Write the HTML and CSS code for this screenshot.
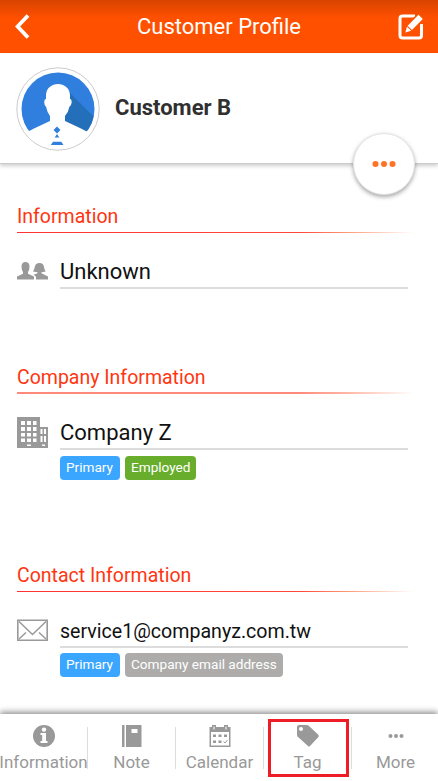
FILE: index.html
```html
<!DOCTYPE html>
<html lang="en">
<head>
  <meta charset="UTF-8">
  <meta name="viewport" content="width=device-width, initial-scale=1">
  <title>Customer Profile</title>
  <link rel="stylesheet" href="styles.css">
</head>
<body>

<header class="topbar">
  <svg class="back" width="15" height="25" viewBox="0 0 15 25"><path d="M13 1.500 2.600 12.500 13 23.500" fill="none" stroke="#fff" stroke-width="3.800"/></svg>
  <h1>Customer Profile</h1>
  <svg class="edit" width="26" height="26" viewBox="0 0 26 26">
    <path d="M17 2H4.500Q2 2 2 4.500V21.500Q2 24 4.500 24H21Q23.500 24 23.500 21.500V10" fill="none" stroke="#fff" stroke-width="3"/>
    <path d="M20.500 -1 27 5.500 14 19H6.500V12Z" fill="#ff5000"/>
    <path d="M20.500 .8 24.800 5 14 16 9.700 11.700Z M9 12.500 13.200 16.800 7.300 18.500Z" fill="#fff"/>
  </svg>
</header>

<div class="profile">
  <svg class="avatar" width="84" height="84" viewBox="0 0 84 84">
    <defs>
      <clipPath id="disc"><circle cx="42" cy="42" r="36.500"/></clipPath>
    </defs>
    <circle cx="42" cy="42" r="41.200" fill="#fff" stroke="#ccc" stroke-width="1"/>
    <g clip-path="url(#disc)">
      <rect width="84" height="84" fill="#307fdf"/>
      <path d="M52 24 84 56V84H48V50Z" fill="#246fb9"/>
    </g>
    <path d="M30 32V28.500C30 13 54 13 54 28.500V32C56.500 32 56 38.500 53.500 39.500Q52.500 45 49 49V54L65 61.500Q69 63.500 72 65L68 73Q56 82 42 82T16 73L11 65Q14 63.500 18 61.500L34 54V49Q31 45 30 39.500C28 38.500 27.500 32 30 32Z" fill="#fff"/>
    <path d="M41 59.500 44.500 63 41 66.500 37.500 63Z M41 67 43.300 70.500H38.700Z M37 74.800H45.300L47.500 78H34.800Z" fill="#307fdf"/>
  </svg>
  <h2>Customer B</h2>
  <button class="fab" aria-label="Actions">
    <svg width="24" height="8" viewBox="0 0 24 8" fill="#ff7226"><circle cx="3.500" cy="4" r="3"/><circle cx="12" cy="4" r="3"/><circle cx="20.500" cy="4" r="3"/></svg>
  </button>
</div>

<main>
  <section class="basic">
    <h3>Information</h3>
    <div class="field">
      <svg width="31" height="31" viewBox="0 0 31 31" fill="#999">
        <path d="M0 23.500V20.500L6 17.800V16Q4.500 14 4.500 10.500Q4.500 6 8.500 6T12.500 10.500Q12.500 14 11 16V17.800L17 20.500V23.500Z"/>
        <path d="M19 23.500V20.500L16.500 18.800L20.500 17.300V16.200L16 15.500Q17.500 13.500 17.700 11Q18.500 7 22.500 7T27 11Q27.200 13.500 28.700 15.500L24.500 16.200V17.300L31 20.500V23.500Z"/>
      </svg>
      <div class="value">Unknown</div>
    </div>
  </section>

  <section class="company">
    <h3>Company Information</h3>
    <div class="field">
      <svg width="31" height="31" viewBox="0 0 31 31">
        <path d="M0 0H23V10H31V31H0Z" fill="#999"/>
        <path d="M4 4h4v4H4zM10 4h4v4h-4zM16 4h3.500v4h-3.500zM4 10h4v4H4zM10 10h4v4h-4zM16 10h3.500v4h-3.500zM4 16h4v3.500H4zM10 16h4v3.500h-4zM16 16h3.500v3.500h-3.500zM4 21.500h4v3.500H4zM10 21.500h4v3.500h-4zM16 21.500h3.500v3.500h-3.500zM10 27.500h4v1.500h-4zM25 27.500h3v1.500h-3zM23.500 12h2v5h-2zM27 12h2v5h-2zM23.500 19h2v6h-2zM27 19h2v6h-2z" fill="#fff"/>
      </svg>
      <div class="value">Company Z</div>
    </div>
    <div class="chips">
      <span class="chip blue">Primary</span>
      <span class="chip green">Employed</span>
    </div>
  </section>

  <section class="contact">
    <h3>Contact Information</h3>
    <div class="field">
      <svg width="31" height="31" viewBox="0 0 31 31" fill="none" stroke="#999">
        <path d="M.8 5.300H30.200V25.200H.8Z" stroke-width="1.600"/>
        <path d="M2 6.500 15.500 19.500 29 6.500M2 24 9 17.500M29 24 22 17.500" stroke-width="1.500"/>
      </svg>
      <div class="value email">service1@companyz.com.tw</div>
    </div>
    <div class="chips">
      <span class="chip blue">Primary</span>
      <span class="chip grey">Company email address</span>
    </div>
  </section>
</main>

<nav class="tabs">
  <a class="tab">
    <svg width="22" height="22" viewBox="0 0 22 22"><circle cx="11" cy="11" r="11" fill="#999"/><circle cx="11" cy="4.600" r="2.200" fill="#fff"/><path d="M7.500 8H13V16H14.500V18H7.500V16H9.200V10H7.500Z" fill="#fff"/></svg>
    <span>Information</span>
  </a>
  <a class="tab">
    <svg width="22" height="22" viewBox="0 0 22 22" fill="#999"><path d="M1.500 0H3.500V22H1.500Q1 22 1 21.500V.5Q1 0 1.500 0ZM5 0H20Q20.500 0 20.500 .5V21.500Q20.500 22 20 22H5ZM10.500 4V8H16.500V4Z" fill-rule="evenodd"/></svg>
    <span>Note</span>
  </a>
  <a class="tab">
    <svg width="22" height="22" viewBox="0 0 22 22" fill="#999"><path d="M.5 2H3V0H7V2H15V0H19V2H21.500V22H.5ZM2 7V20.500H20V7ZM4.500 1.500V4.500H5.500V1.500ZM16.500 1.500V4.500H17.500V1.500Z" fill-rule="evenodd"/><path d="M4 9.500h3v2.500H4zM9.500 9.500h3v2.500h-3zM15 9.500h3v2.500h-3zM4 15.500h3v2.500H4zM9.500 15.500h3v2.500h-3z"/><path d="M14.500 16.500 16 18 18.500 15" fill="none" stroke="#999"/></svg>
    <span>Calendar</span>
  </a>
  <a class="tab marked">
    <svg width="22" height="22" viewBox="0 0 22 22" fill="#999"><path d="M2 0H9.500Q11 0 12 1L21 9.500Q22.500 11 21 12.500L13 21Q12 22 11 21L1 12Q0 11 0 9.500V2Q0 0 2 0ZM4 2A2 2 0 1 0 4 6A2 2 0 1 0 4 2Z" fill-rule="evenodd"/></svg>
    <span>Tag</span>
  </a>
  <a class="tab">
    <svg width="22" height="22" viewBox="0 0 22 22" fill="#999"><circle cx="5.500" cy="11" r="2"/><circle cx="11" cy="11" r="2"/><circle cx="16.500" cy="11" r="2"/></svg>
    <span>More</span>
  </a>
</nav>

</body>
</html>
```

FILE: styles.css
```css
*, *::after {
  box-sizing: border-box;
}

body {
  margin: 0;
  height: 781px;
  display: flex;
  flex-direction: column;
  overflow: hidden;
  font-family: Roboto, "Liberation Sans", sans-serif;
  background: #fff;
  color: #111;
}

svg {
  display: block;
  flex: none;
}

h1, h2, h3 {
  margin: 0;
}

.topbar {
  height: 53px;
  flex: none;
  padding: 0 13px 0 15px;
  display: grid;
  grid-template-columns: 26px 1fr 26px;
  align-items: center;
  background: linear-gradient(#d84400, #ff5000 18px);
  color: #fff;
}

.topbar h1 {
  padding-right: 2px;
  font-size: 22px;
  font-weight: 400;
  text-align: center;
}

.edit {
  margin-left: -1px;
}

.profile {
  position: relative;
  height: 111px;
  flex: none;
  padding-left: 16px;
  display: flex;
  align-items: center;
  gap: 15px;
  border-bottom: 1px solid #ccc;
  box-shadow: 0 2px 4px rgba(0, 0, 0, 0.2);
}

.avatar {
  margin-top: 1px;
}

.profile h2 {
  padding-bottom: 2px;
  font-size: 22px;
  font-weight: 700;
  color: #303030;
}

.fab {
  position: absolute;
  right: 23px;
  bottom: -32px;
  width: 62px;
  height: 62px;
  padding: 0 0 1px;
  display: flex;
  align-items: center;
  justify-content: center;
  border: 1px solid #e4e4e4;
  border-radius: 50%;
  background: #fff;
  box-shadow: 0 2px 4px rgba(0, 0, 0, 0.35);
}

main {
  flex: 1;
  padding: 36px 17px 0;
}

.basic {
  height: 161px;
}

.company {
  height: 198px;
}

h3 {
  height: 33px;
  font-size: 19.5px;
  font-weight: 400;
  line-height: 33px;
  color: #ff3511;
  background: linear-gradient(90deg, #f33 0, #ff4838 70%, #ff9a78 82%, #fff 98%) bottom / 100% 1.5px no-repeat;
}

.company h3 {
  background-image: linear-gradient(90deg, #ff8a7c 0, #ff8a7c 70%, #ffb8a6 82%, #fff 98%);
  background-size: 100% 2px;
}

.field {
  display: flex;
  align-items: center;
  gap: 12px;
  padding: 21px 13px 0 0;
}

.value {
  flex: 1;
  height: 35px;
  line-height: 36px;
  font-size: 22px;
  border-bottom: 2px solid #dcdcdc;
}

.email {
  line-height: 38px;
  font-size: 19.6px;
}

.chips {
  display: flex;
  gap: 5px;
  padding: 6px 0 0 43px;
}

.contact .chips {
  padding-top: 5px;
}

.chip {
  height: 24px;
  padding: 0 6px;
  border-radius: 4px;
  font-size: 13.6px;
  line-height: 22px;
  color: #fff;
}

.blue {
  width: 60px;
  background: #3aa6ff;
}

.green {
  background: #68ad2c;
}

.grey {
  background: #adacaa;
}

.tabs {
  height: 67px;
  flex: none;
  display: grid;
  grid-template-columns: repeat(5, 88px);
  background: #fff;
  box-shadow: 0 -2px 6px rgba(0, 0, 0, 0.45);
}

.tab {
  position: relative;
  display: flex;
  flex-direction: column;
  align-items: center;
  padding: 11px 1px 0 0;
  font-size: 17px;
  line-height: 20px;
  color: #999;
  background: linear-gradient(#ddd, #ddd) 100% 13px / 1px 42px no-repeat;
}

.tab:last-child {
  background: none;
}

.tab span {
  margin-top: 5px;
}

/* outline around the highlighted tab */
.marked::after {
  content: "";
  position: absolute;
  left: 4px;
  top: 5px;
  width: 81px;
  height: 58px;
  border: 3px solid #ee1c25;
}
```
